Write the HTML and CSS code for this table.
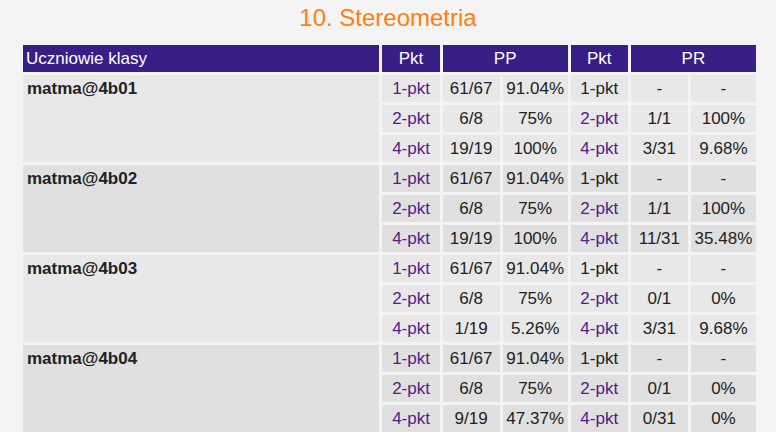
FILE: index.html
```html
<!DOCTYPE html>
<html lang="pl">
<head>
<meta charset="utf-8">
<title>Stereometria</title>
<link rel="stylesheet" href="styles.css">
</head>
<body>
<h1 class="title">10. Stereometria</h1>
<table class="results">
<colgroup>
<col class="c-name"><col class="c-pkt"><col class="c-frac"><col class="c-pct"><col class="c-pkt"><col class="c-frac"><col class="c-pct">
</colgroup>
<thead>
<tr><th class="left">Uczniowie klasy</th><th>Pkt</th><th colspan="2">PP</th><th>Pkt</th><th colspan="2">PR</th></tr>
</thead>
<tbody class="odd">
<tr><td class="name" rowspan="3">matma@4b01</td><td><a href="#">1-pkt</a></td><td>61/67</td><td>91.04%</td><td>1-pkt</td><td>-</td><td>-</td></tr>
<tr><td><a href="#">2-pkt</a></td><td>6/8</td><td>75%</td><td><a href="#">2-pkt</a></td><td>1/1</td><td>100%</td></tr>
<tr><td><a href="#">4-pkt</a></td><td>19/19</td><td>100%</td><td><a href="#">4-pkt</a></td><td>3/31</td><td>9.68%</td></tr>
</tbody>
<tbody class="even">
<tr><td class="name" rowspan="3">matma@4b02</td><td><a href="#">1-pkt</a></td><td>61/67</td><td>91.04%</td><td>1-pkt</td><td>-</td><td>-</td></tr>
<tr><td><a href="#">2-pkt</a></td><td>6/8</td><td>75%</td><td><a href="#">2-pkt</a></td><td>1/1</td><td>100%</td></tr>
<tr><td><a href="#">4-pkt</a></td><td>19/19</td><td>100%</td><td><a href="#">4-pkt</a></td><td>11/31</td><td>35.48%</td></tr>
</tbody>
<tbody class="odd">
<tr><td class="name" rowspan="3">matma@4b03</td><td><a href="#">1-pkt</a></td><td>61/67</td><td>91.04%</td><td>1-pkt</td><td>-</td><td>-</td></tr>
<tr><td><a href="#">2-pkt</a></td><td>6/8</td><td>75%</td><td><a href="#">2-pkt</a></td><td>0/1</td><td>0%</td></tr>
<tr><td><a href="#">4-pkt</a></td><td>1/19</td><td>5.26%</td><td><a href="#">4-pkt</a></td><td>3/31</td><td>9.68%</td></tr>
</tbody>
<tbody class="even">
<tr><td class="name" rowspan="3">matma@4b04</td><td><a href="#">1-pkt</a></td><td>61/67</td><td>91.04%</td><td>1-pkt</td><td>-</td><td>-</td></tr>
<tr><td><a href="#">2-pkt</a></td><td>6/8</td><td>75%</td><td><a href="#">2-pkt</a></td><td>0/1</td><td>0%</td></tr>
<tr><td><a href="#">4-pkt</a></td><td>9/19</td><td>47.37%</td><td><a href="#">4-pkt</a></td><td>0/31</td><td>0%</td></tr>
</tbody>
</table>
</body>
</html>
```
FILE: styles.css
```css
html, body {
  margin: 0;
  padding: 0;
  background: #f4f4f4;
}
body {
  font-family: "Liberation Sans", Arial, sans-serif;
  color: #222;
}
.title {
  margin: 4px 0 10px;
  font-size: 24px;
  line-height: 28px;
  font-weight: normal;
  color: #ff7f0e;
  text-align: center;
}
.results {
  margin-left: 20px;
  border-collapse: separate;
  border-spacing: 3px;
  table-layout: fixed;
  width: 739px;
  font-size: 17px;
  line-height: 19px;
}
.c-name { width: 356px; }
.c-pkt { width: 57px; }
.c-frac { width: 57px; }
.c-pct { width: 65px; }
.results th, .results td {
  box-sizing: border-box;
  padding: 4px 3px;
  height: 27px;
  text-align: center;
  white-space: nowrap;
}
.results th {
  background: #371f85;
  color: #fff;
  font-weight: normal;
}
.results th.left { text-align: left; }
.results td.name {
  text-align: left;
  vertical-align: top;
  font-weight: bold;
  padding-left: 4px;
}
.odd td { background: #e8e8e8; }
.even td { background: #e0e0e0; }
.results a {
  color: #551a8b;
  text-decoration: none;
}
```
